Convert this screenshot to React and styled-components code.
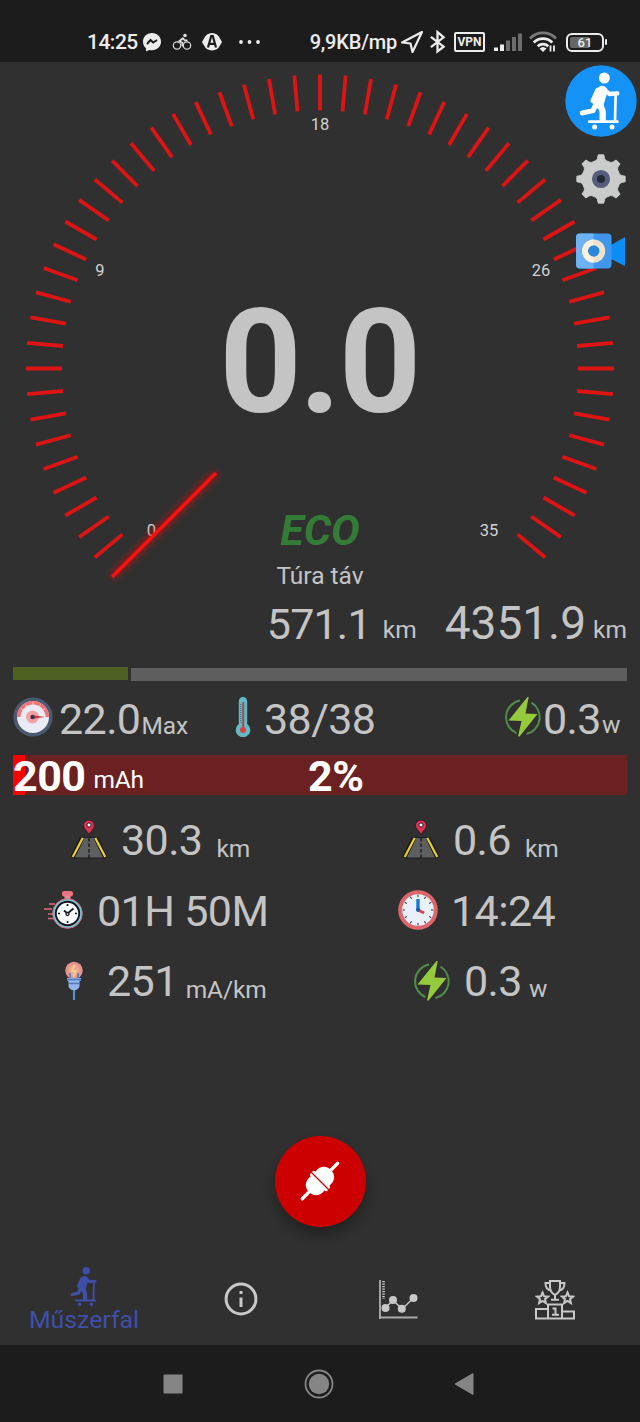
import React from "react";
import styled, { createGlobalStyle } from "styled-components";

const GlobalStyle = createGlobalStyle`
  *, *::before, *::after { box-sizing: border-box; }
  body { margin: 0; background: #303030; font-family: Roboto, "Liberation Sans", sans-serif; }
  svg { display: block; flex: none; }
`;

const Screen = styled.div`
  width: 640px;
  height: 1422px;
  display: flex;
  flex-direction: column;
  overflow: hidden;
  background: #303030;
  color: #c4c4c4;
`;

const Text = styled.span`
  font-size: ${(p) => p.$size}px;
  font-weight: ${(p) => p.$weight || 400};
  font-style: ${(p) => (p.$italic ? "italic" : "normal")};
  letter-spacing: ${(p) => p.$track || 0}px;
  color: ${(p) => p.$color || "inherit"};
  line-height: 1;
  white-space: pre;
`;

/* ---------- status bar ---------- */

const StatusBar = styled.header`
  height: 62px;
  flex: none;
  display: flex;
  justify-content: space-between;
  align-items: center;
  padding: 22px 33px 0 87px;
  background: #1c1c1c;
  color: #ededed;
`;

const StatusGroup = styled.div`
  display: flex;
  align-items: center;
  height: 40px;
`;

const StatusIcon = styled.svg`
  width: ${(p) => p.$w}px;
  height: 24px;
  margin-left: ${(p) => p.$gap || 0}px;
`;

const VpnBadge = styled.span`
  width: 31px;
  height: 20px;
  margin-left: 8px;
  border: 2px solid #ededed;
  border-radius: 2px;
  display: flex;
  align-items: center;
  justify-content: center;
  font-size: 12px;
  font-weight: 700;
  line-height: 1;
`;

const Battery = styled.span`
  width: 38px;
  height: 19px;
  margin-left: 9px;
  border: 2px solid #ededed;
  border-radius: 6px;
  padding: 2px;
  display: flex;
  align-items: center;
  justify-content: center;
  font-size: 13px;
  font-weight: 500;
  line-height: 1;
  background: linear-gradient(90deg, #666 62%, transparent 62%) content-box;
`;

const BatteryTip = styled.span`
  width: 2px;
  height: 6px;
  margin-left: 1px;
  border-radius: 1px;
  background: #ededed;
`;

/* ---------- dashboard ---------- */

const Dashboard = styled.main`
  flex: none;
  height: 1192px;
  position: relative;
  display: flex;
  flex-direction: column;
`;

const GaugeSection = styled.section`
  display: grid;
  height: 595px;
  flex: none;
`;

const GaugeDial = styled.svg`
  grid-area: 1 / 1;
  width: 640px;
  height: 595px;
`;

const Readout = styled.div`
  grid-area: 1 / 1;
  z-index: 1;
  display: flex;
  flex-direction: column;
  align-items: center;
  padding-top: 229px;
`;

const SpeedValue = styled(Text)`
  padding-right: 2px;
`;

const ModeLabel = styled.div`
  margin-top: 74px;
  height: 42px;
  display: flex;
`;

const TripLabel = styled.div`
  margin-top: 13px;
  height: 24px;
  display: flex;
`;

const Odometers = styled.div`
  align-self: stretch;
  display: flex;
  align-items: flex-end;
  justify-content: flex-end;
  gap: 28px;
  padding-right: 13px;
  margin-top: 12px;
  height: 46px;
`;

const Reading = styled.div`
  display: flex;
  align-items: flex-end;
  gap: ${(p) => p.$gap}px;
`;

const Unit = styled(Text)`
  margin-bottom: ${(p) => p.$lift || 0}px;
`;

const SideActions = styled.nav`
  position: absolute;
  z-index: 2;
  top: 3px;
  right: 3px;
  display: flex;
  flex-direction: column;
  align-items: center;
`;

const ActionButton = styled.button`
  border: 0;
  padding: 0;
  background: none;
  margin-top: ${(p) => p.$top || 0}px;
`;

const PowerBar = styled.div`
  display: flex;
  gap: 3px;
  padding: 0 13px;
  margin-top: 10px;
  height: 14px;
  flex: none;
`;

const PowerSegment = styled.div`
  height: 13px;
  flex: ${(p) => (p.$width ? `0 0 ${p.$width}px` : "1")};
  margin-top: ${(p) => p.$top || 0}px;
  background: ${(p) => p.$color};
`;

const QuickStats = styled.div`
  display: grid;
  grid-template-columns: 222px 269px 1fr;
  align-items: start;
  padding-left: 13px;
  margin-top: 17px;
  height: 57px;
  flex: none;
`;

const Stat = styled.div`
  display: flex;
  align-items: flex-end;
  height: 43px;
  padding-left: ${(p) => p.$inset || 0}px;
`;

const StatIcon = styled.svg`
  width: ${(p) => p.$w || 40}px;
  height: 40px;
  margin-right: ${(p) => p.$gap || 0}px;
  margin-bottom: ${(p) => p.$lift ?? 3}px;
`;

const ChargeBar = styled.div`
  height: 40px;
  margin: 0 13px;
  flex: none;
  display: grid;
  grid-template-columns: 295px 1fr;
  align-items: center;
  color: #fff;
  background: linear-gradient(90deg, #ff0000 12px, #6b2121 12px);
`;

const TripGrid = styled.div`
  display: grid;
  grid-template-columns: 330px 310px;
  grid-auto-rows: 70.5px;
  margin-top: 24px;
  flex: none;
`;

const ConnectArea = styled.div`
  display: flex;
  justify-content: center;
  margin-top: 105px;
`;

const ConnectButton = styled.button`
  width: 91px;
  height: 91px;
  padding: 0;
  border: 0;
  border-radius: 50%;
  display: grid;
  place-items: center;
  background: #cc0000;
  box-shadow: 0 8px 13px rgba(0, 0, 0, 0.3);
`;

/* ---------- bottom bars ---------- */

const TabBar = styled.nav`
  height: 91px;
  flex: none;
  display: grid;
  grid-template-columns: 162px 157px 157px 164px;
  background: #303030;
`;

const Tab = styled.div`
  display: flex;
  flex-direction: column;
  align-items: center;
  padding-top: ${(p) => p.$top}px;
  padding-left: ${(p) => p.$left || 0}px;
  padding-right: ${(p) => p.$right || 0}px;
  gap: 2px;
  color: ${(p) => (p.$active ? "#3f4fa8" : "#c8c8c8")};
`;

const SystemBar = styled.footer`
  flex: 1;
  display: flex;
  justify-content: space-between;
  align-items: center;
  padding: 0 166px 0 163px;
  background: #1c1c1c;
`;

/* ---------- drawings ---------- */

const Rider = ({ width, height, viewBox, color, disc }) => (
  <svg width={width} height={height} viewBox={viewBox}>
    {disc && <circle cx="153" cy="122" r="107" fill="#1592f5" />}
    <g fill="none" stroke={color} strokeLinecap="round" strokeLinejoin="round">
      <path d="M156 93L145 128" strokeWidth="33" />
      <path d="M160 85L178 101L202 99" strokeWidth="13" />
      <path d="M143 90L129 121" strokeWidth="15" />
      <path d="M138 130L129 151L97 158" strokeWidth="15" />
      <path d="M149 130L158 153L158 177" strokeWidth="19" />
      <path d="M197 101L195 183" strokeWidth="8" />
      <path d="M118 184H202" strokeWidth="8.500" />
    </g>
    <g fill={color}>
      <circle cx="163" cy="53" r="16.500" />
      <circle cx="134" cy="200" r="7.500" />
      <circle cx="186" cy="200" r="7.500" />
    </g>
  </svg>
);

const GEAR = (() => {
  const pts = [];
  for (let i = 0; i < 8; i++) {
    [[-16, 19], [-10, 20.5], [-6.5, 24.3], [6.5, 24.3], [10, 20.5], [16, 19]].forEach(([deg, r]) => {
      const a = ((i * 45 + deg - 90) * Math.PI) / 180;
      pts.push(`${(25 + r * Math.cos(a)).toFixed(2)},${(25 + r * Math.sin(a)).toFixed(2)}`);
    });
  }
  return pts.join(" ");
})();

const GearIcon = () => (
  <svg width="50" height="50" viewBox="0 0 50 50">
    <polygon points={GEAR} fill="#c9cccb" stroke="#c9cccb" strokeWidth="1" strokeLinejoin="round" />
    <circle cx="25" cy="25" r="6.600" fill="#252b36" stroke="#565d7b" strokeWidth="5" />
  </svg>
);

const CameraIcon = () => (
  <svg width="50" height="36" viewBox="0 0 50 36">
    <path d="M35 12L49 4V33L35 26Z" fill="#0b8df5" />
    <rect x="0" y="0.500" width="35.500" height="35" rx="4" fill="#3f97ec" />
    <path d="M4 .5H17.500V35.500H4Q0 35.500 0 31.500V4.500Q0 .5 4 .5Z" fill="#6cb2f4" />
    <circle cx="17.700" cy="18" r="8.600" fill="#2a87dc" stroke="#efe3cc" strokeWidth="5.800" />
    <path d="M17.700 6.500A11.500 11.500 0 0 0 17.700 29.500V24A6 6 0 0 1 17.700 12Z" fill="#fbf1de" />
  </svg>
);

const SpeedIcon = () => (
  <StatIcon viewBox="0 0 40 40" $gap={6} $lift={4}>
    <circle cx="20" cy="20" r="17.800" fill="#e9ecf7" stroke="#4b5a70" strokeWidth="3.600" />
    <path d="M5.700 20A14.300 14.300 0 0 1 34.300 20" fill="none" stroke="#ef7376" strokeWidth="3.600" />
    <path d="M8 11.500L10 13M12.500 7.500L14 9.500M20 5V8M27.500 7.500L26 9.500M32 11.500L30 13" stroke="#e9ecf7" strokeWidth=".7" />
    <circle cx="19.500" cy="20" r="6.500" fill="#f7a1a4" />
    <path d="M20 18.300L32 20L20 21.700Z" fill="#c63d45" />
    <circle cx="19.500" cy="20" r="2.200" fill="#323a4b" />
  </StatIcon>
);

const ThermometerIcon = () => (
  <StatIcon viewBox="0 0 16 40" $w={16} $gap={13} $lift={4}>
    <path d="M8 0C5.500 0 3.800 2 3.800 4.500V27A7.300 7.300 0 1 0 12.200 27V4.500C12.200 2 10.500 0 8 0Z" fill="#63b9c6" />
    <path d="M5.700 7V27" stroke="#327985" strokeWidth="1.200" strokeDasharray="1 1" />
    <path d="M8.200 6V32" stroke="#a9494b" strokeWidth="2" strokeLinecap="round" />
    <circle cx="8" cy="33" r="3" fill="#dc3f3e" />
  </StatIcon>
);

const BoltIcon = ({ gap, lift }) => (
  <StatIcon viewBox="0 0 38 40" $w={38} $gap={gap} $lift={lift}>
    <path d="M16 3.500A17.200 17.200 0 0 0 12.500 36.200M27.500 5.600A17.200 17.200 0 0 1 22.500 37" fill="none" stroke="#508c4a" strokeWidth="2" />
    <path d="M23.500 0L4.500 23.500L17.500 24L14 39.500H15.500L33.500 17L21.500 16.500L24.700 0Z" fill="#95ca3d" />
  </StatIcon>
);

const RoadIcon = ({ gap }) => (
  <StatIcon viewBox="0 0 38 40" $w={38} $gap={gap} $lift={2}>
    <path d="M13 17.500H25L35.500 38H2.500Z" fill="#5d5f61" stroke="#1e1e20" />
    <path d="M12 18L2.500 37.500M26 18L35.500 37.500" stroke="#19191b" strokeWidth="4.600" />
    <path d="M12.700 18L2.700 37M25.300 18L35.300 37" stroke="#ecd02f" strokeWidth="2.200" />
    <path d="M19 18V38" stroke="#232327" strokeWidth="1.600" strokeDasharray="3.500 2" />
    <path d="M19 14.500C17 11 13.500 8.500 13.500 5.600A5.500 5.500 0 0 1 24.500 5.600C24.500 8.500 21 11 19 14.500Z" fill="#de3453" stroke="#2a171d" strokeWidth=".8" />
    <circle cx="19" cy="5" r="2.100" fill="#fff" stroke="#291b20" />
  </StatIcon>
);

const StopwatchIcon = () => (
  <StatIcon viewBox="0 0 40 40" $gap={13}>
    <path d="M5 14H11M0 19H8M4 24H9M4 28.500H11" stroke="#dd6b7c" strokeWidth="1.500" />
    <rect x="18" y="1" width="11" height="5.500" rx="2.200" fill="#ea7282" />
    <rect x="20.500" y="5.500" width="6" height="4" fill="#e98992" />
    <circle cx="23.500" cy="23.500" r="14.800" fill="#79c5cf" stroke="#d66c80" strokeWidth="1" />
    <circle cx="23.500" cy="23.500" r="11.700" fill="#fafafc" stroke="#11161d" strokeWidth="1.900" />
    <path d="M23.500 14V16M23.500 31V33M14 23.500H16M31 23.500H33" stroke="#11161d" strokeWidth="1.600" />
    <path d="M20 20.500L23.500 23.500L29.500 18.500" fill="none" stroke="#11161d" strokeWidth="1.700" />
    <circle cx="23.500" cy="24" r="1.500" fill="#fff" stroke="#11161d" strokeWidth="1.300" />
  </StatIcon>
);

const ClockIcon = () => (
  <StatIcon viewBox="0 0 40 40" $gap={13}>
    <circle cx="20" cy="20" r="17.800" fill="#e9f0fa" stroke="#dc666b" strokeWidth="4" />
    {Array.from({ length: 12 }, (_, i) => (
      <path key={i} d="M20 4.800V7" stroke="#28282e" strokeWidth="1" transform={`rotate(${i * 30} 20 20)`} />
    ))}
    <path d="M20 9V19" stroke="#1777d6" strokeWidth="3.400" />
    <path d="M20 20L26 23" stroke="#dc4a50" strokeWidth="3" />
    <circle cx="20" cy="19.800" r="2.100" fill="#175ea8" />
  </StatIcon>
);

const PlugBulbIcon = () => (
  <StatIcon viewBox="0 0 20 40" $w={20} $gap={23} $lift={2}>
    <circle cx="10" cy="9.500" r="8.700" fill="#e49390" />
    <circle cx="10" cy="9.500" r="5.500" fill="#efa88f" />
    <path d="M10.500 4L8 10H11.500L9.500 16" fill="none" stroke="#f2d28b" strokeWidth="2" />
    <path d="M6 12V18M14 12V18" stroke="#6b83b5" strokeWidth="2" />
    <path d="M3 17H17V19.500L15.500 20V25C15.500 27 13 28 12.500 29H7.500C7 28 4.500 27 4.500 25V20L3 19.500Z" fill="#94b6ec" />
    <path d="M3 18.500H17M5 22.500H15.500" stroke="#4b78c1" strokeWidth="1.400" />
    <path d="M10 29V39" stroke="#5a8fd5" strokeWidth="2.200" />
  </StatIcon>
);

const ConnectIcon = () => (
  <svg width="42" height="42" viewBox="-21 -21 42 42">
    <g transform="rotate(-45)" fill="#fff">
      <path d="M-25 0H-14M14 0H25" stroke="#fff" strokeWidth="3.400" strokeLinecap="round" />
      <path d="M-.6 -12H-1.700Q-3.200 -12 -3.200 -10.500V-10H-6C-11.500 -10 -15.500 -6 -15.500 0S-11.500 10 -6 10H-3.200V10.500Q-3.200 12 -1.700 12H-.6Z" />
      <path d="M.6 -12H1.700Q3.200 -12 3.200 -10.500V-10H6C11.500 -10 15.500 -6 15.500 0S11.500 10 6 10H3.200V10.500Q3.200 12 1.700 12H.6Z" />
    </g>
  </svg>
);

const InfoIcon = () => (
  <svg width="34" height="34" viewBox="0 0 34 34">
    <circle cx="17" cy="17" r="14.900" fill="none" stroke="currentColor" strokeWidth="3" />
    <path d="M17 15.500V25M17 9V12" stroke="currentColor" strokeWidth="3" />
  </svg>
);

const ChartIcon = () => (
  <svg width="40" height="40" viewBox="0 0 40 40">
    <path d="M2 0V39" stroke="currentColor" strokeWidth="1.500" />
    <path d="M1 37.500H39.500" stroke="#aaa" strokeWidth="1.800" />
    <path d="M5.500 1V19" stroke="currentColor" strokeWidth="2.600" strokeDasharray="1.200 1.300" />
    <path d="M7.500 28L15 20L24 29L35.500 18" fill="none" stroke="currentColor" strokeWidth="1.400" />
    {[[7.5, 28], [15, 20], [23.8, 28.7], [35.5, 18]].map(([x, y]) => (
      <circle key={x} cx={x} cy={y} r="4" fill="currentColor" />
    ))}
  </svg>
);

const STAR = "M0 -5.5L1.600 -1.700L5.500 -1.400L2.500 1.200L3.400 5.200L0 3L-3.400 5.200L-2.500 1.200L-5.500 -1.400L-1.600 -1.700Z";

const PodiumIcon = () => (
  <svg width="40" height="40" viewBox="0 0 40 40" fill="none" stroke="currentColor" strokeWidth="2">
    <path d="M15 1H25V7C25 11 23 13.500 20 15C17 13.500 15 11 15 7Z" />
    <path d="M15 3H10.500C10.500 7 12 10 16 10.500M25 3H29.500C29.500 7 28 10 24 10.500M20 15V19.500M16 19.800H24" />
    <path d={STAR} transform="translate(7.500 18)" />
    <path d={STAR} transform="translate(32.500 18)" />
    <path d="M13 24.500H27V38.500H13ZM13 29H1V38.500H13M27 31.500H39V38.500H27" />
    <path d="M17.500 28.500H20.500V34.500M17 34.700H24" />
  </svg>
);

/* ---------- gauge ---------- */

const TICKS = Array.from({ length: 53 }, (_, i) => -130 + i * 5);
const MARKS = [
  { label: "0", x: 151.5, y: 536 - 62 },
  { label: "9", x: 100, y: 276 - 62 },
  { label: "18", x: 320, y: 129.500 - 62 },
  { label: "26", x: 541, y: 276 - 62 },
  { label: "35", x: 489, y: 536 - 62 },
];

const Gauge = () => (
  <GaugeDial viewBox="0 0 640 595">
    <defs>
      <filter id="glow" x="-20%" y="-20%" width="140%" height="140%">
        <feGaussianBlur stdDeviation="3.500" />
      </filter>
    </defs>
    {TICKS.map((deg) => (
      <path key={deg} d="M320 12.500V48.500" stroke="#dc1414" strokeWidth="3.800" transform={`rotate(${deg} 320 306.500)`} />
    ))}
    {MARKS.map((m) => (
      <text key={m.label} x={m.x} y={m.y} fontSize="16.500" textAnchor="middle" fill="#d2d2d2">{m.label}</text>
    ))}
    <path d="M112 515L216 411" stroke="#ff0000" strokeWidth="6" opacity=".65" filter="url(#glow)" />
    <path d="M112 515L216 411" stroke="#f41111" strokeWidth="3.600" />
  </GaugeDial>
);

const Value = ({ value, unit, gap, lift }) => (
  <Reading $gap={gap}>
    <Text $size={43} $track={-0.6}>{value}</Text>
    {unit && <Unit $size={24.5} $track={-0.1} $lift={lift ?? 2}>{unit}</Unit>}
  </Reading>
);

export default function App() {
  return (
    <Screen>
      <GlobalStyle />
      <StatusBar>
        <StatusGroup>
          <Text $size={21} $weight={500} $track={-0.5}>14:25</Text>
          <StatusIcon viewBox="0 0 20 24" $w={20} $gap={4}>
            <path d="M10 3C4.800 3 1 6.800 1 11.700C1 14.500 2.200 16.800 4 18.300V21.500L7.200 19.900C13.800 21.500 19 17.200 19 11.700C19 6.800 15.200 3 10 3Z" fill="#ededed" />
            <path d="M5 14L8.500 10L11.200 12.500L15 10" fill="none" stroke="#1c1c1c" strokeWidth="2" />
          </StatusIcon>
          <StatusIcon viewBox="0 0 20 24" $w={20} $gap={10} fill="none" stroke="#dedede" strokeWidth="1.200">
            <circle cx="5" cy="15.500" r="3.700" /><circle cx="15" cy="15.500" r="3.700" />
            <circle cx="13" cy="5.500" r="1.800" fill="#dedede" stroke="none" />
            <path d="M15.500 10.500L12.700 10.300L10.800 8.200L7.500 11L10.500 13V16.500" strokeWidth="1.800" />
          </StatusIcon>
          <StatusIcon viewBox="0 0 22 24" $w={22} $gap={9}>
            <path d="M11 3A9 9 0 0 1 19 8.500L21 12L19 15.500A9 9 0 0 1 3 15.500L1 12L3 8.500A9 9 0 0 1 11 3Z" fill="#ededed" />
            <path d="M7 17.500L10.200 6H11.800L15 17.500M8 13.800H14" fill="none" stroke="#1c1c1c" strokeWidth="2.200" />
          </StatusIcon>
          <StatusIcon viewBox="0 0 24 24" $w={24} $gap={15} fill="#ededed">
            <circle cx="3" cy="12" r="1.900" /><circle cx="11.500" cy="12" r="1.900" /><circle cx="20" cy="12" r="1.900" />
          </StatusIcon>
        </StatusGroup>
        <StatusGroup>
          <Text $size={20} $weight={500} $track={-0.2}>9,9KB/mp</Text>
          <StatusIcon viewBox="0 0 24 24" $w={24} $gap={3} fill="none" stroke="#ededed" strokeWidth="2.200" strokeLinejoin="round">
            <path d="M22 2L2 12.500L10.500 13.500L12.500 22Z" />
          </StatusIcon>
          <StatusIcon viewBox="0 0 18 24" $w={17} $gap={5} fill="none" stroke="#ededed" strokeWidth="2.400">
            <path d="M2 6.500L15.500 17L9 22V1.500L15.500 7L2 17.500" />
          </StatusIcon>
          <VpnBadge>VPN</VpnBadge>
          <StatusIcon viewBox="0 0 28 24" $w={28} $gap={9}>
            <path d="M0 17.500H4V21H0ZM6 14.500H10V21H6Z" fill="#ededed" />
            <path d="M12 10.500H16V21H12ZM18 7H22V21H18ZM24 3.500H28V21H24Z" fill="#6d6d6d" />
          </StatusIcon>
          <StatusIcon viewBox="0 0 28 24" $w={28} $gap={7} fill="none" strokeWidth="2.800">
            <path d="M1 8.500A18 18 0 0 1 27 8.500" stroke="#7a7a7a" />
            <path d="M4.700 12.500A13 13 0 0 1 23.300 12.500M8.700 16.200A8 8 0 0 1 19.300 16.200" stroke="#ededed" />
            <path d="M10.500 18.500Q14 15.500 17.500 18.500L14 22Z" fill="#ededed" />
            <path d="M21.500 21.500V15.500M25 15.500V21.500" stroke="#ededed" strokeWidth="1.800" />
          </StatusIcon>
          <Battery>61</Battery>
          <BatteryTip />
        </StatusGroup>
      </StatusBar>

      <Dashboard>
        <SideActions>
          <ActionButton>
            <Rider width={72} height={72} viewBox="45 14 216 216" color="#fff" disc />
          </ActionButton>
          <ActionButton $top={17}><GearIcon /></ActionButton>
          <ActionButton $top={29}><CameraIcon /></ActionButton>
        </SideActions>

        <GaugeSection>
          <Gauge />
          <Readout>
            <SpeedValue $size={144} $weight={700} $track={-2.5}>0.0</SpeedValue>
            <ModeLabel><Text $size={43} $weight={700} $italic $color="#347b37">ECO</Text></ModeLabel>
            <TripLabel><Text $size={24.5}>Túra táv</Text></TripLabel>
            <Odometers>
              <Reading $gap={12}>
                <Text $size={43} $track={-0.8}>571.1</Text>
                <Unit $size={24.5} $lift={4}>km</Unit>
              </Reading>
              <Reading $gap={7}>
                <Text $size={46}>4351.9</Text>
                <Unit $size={24.5} $lift={4}>km</Unit>
              </Reading>
            </Odometers>
          </Readout>
        </GaugeSection>

        <PowerBar>
          <PowerSegment $width={115} $color="#4f6122" />
          <PowerSegment $top={1} $color="#5e5e5e" />
        </PowerBar>

        <QuickStats>
          <Stat><SpeedIcon /><Value value="22.0" unit="Max" gap={1} lift={3} /></Stat>
          <Stat><ThermometerIcon /><Value value="38/38" /></Stat>
          <Stat><BoltIcon gap={1} lift={4} /><Value value="0.3" unit="w" gap={1} lift={4} /></Stat>
        </QuickStats>

        <ChargeBar>
          <Reading $gap={8}>
            <Text $size={43} $weight={700} $track={-0.5}>200</Text>
            <Unit $size={24.5} $lift={6} $track={-0.2}>mAh</Unit>
          </Reading>
          <Text $size={43} $weight={700} $track={-0.3}>2%</Text>
        </ChargeBar>

        <TripGrid>
          <Stat $inset={70}><RoadIcon gap={13} /><Value value="30.3" unit="km" gap={14} lift={1} /></Stat>
          <Stat $inset={72}><RoadIcon gap={13} /><Value value="0.6" unit="km" gap={14} lift={1} /></Stat>
          <Stat $inset={44}><StopwatchIcon /><Value value="01H 50M" /></Stat>
          <Stat $inset={68}><ClockIcon /><Value value="14:24" /></Stat>
          <Stat $inset={64}><PlugBulbIcon /><Value value="251" unit="mA/km" gap={8} lift={1} /></Stat>
          <Stat $inset={83}><BoltIcon gap={13} lift={2} /><Value value="0.3" unit="w" gap={7} lift={2} /></Stat>
        </TripGrid>

        <ConnectArea>
          <ConnectButton><ConnectIcon /></ConnectButton>
        </ConnectArea>
      </Dashboard>

      <TabBar>
        <Tab $active $top={13} $left={6}>
          <Rider width={27} height={39} viewBox="96 36 119 172" color="currentColor" />
          <Text $size={24.8}>Műszerfal</Text>
        </Tab>
        <Tab $top={28}><InfoIcon /></Tab>
        <Tab $top={26} $left={1}><ChartIcon /></Tab>
        <Tab $top={26} $right={6}><PodiumIcon /></Tab>
      </TabBar>

      <SystemBar>
        <svg width="20" height="20" viewBox="0 0 20 20"><rect x=".5" y=".5" width="19" height="19" rx="1" fill="#858585" /></svg>
        <svg width="30" height="30" viewBox="0 0 30 30">
          <circle cx="15" cy="15" r="13.500" fill="none" stroke="#858585" strokeWidth="1.800" />
          <circle cx="15" cy="15" r="10.200" fill="#858585" />
        </svg>
        <svg width="20" height="24" viewBox="0 0 20 24"><path d="M1 12L19 1.500V22.500Z" fill="#858585" stroke="#858585" strokeLinejoin="round" /></svg>
      </SystemBar>
    </Screen>
  );
}
